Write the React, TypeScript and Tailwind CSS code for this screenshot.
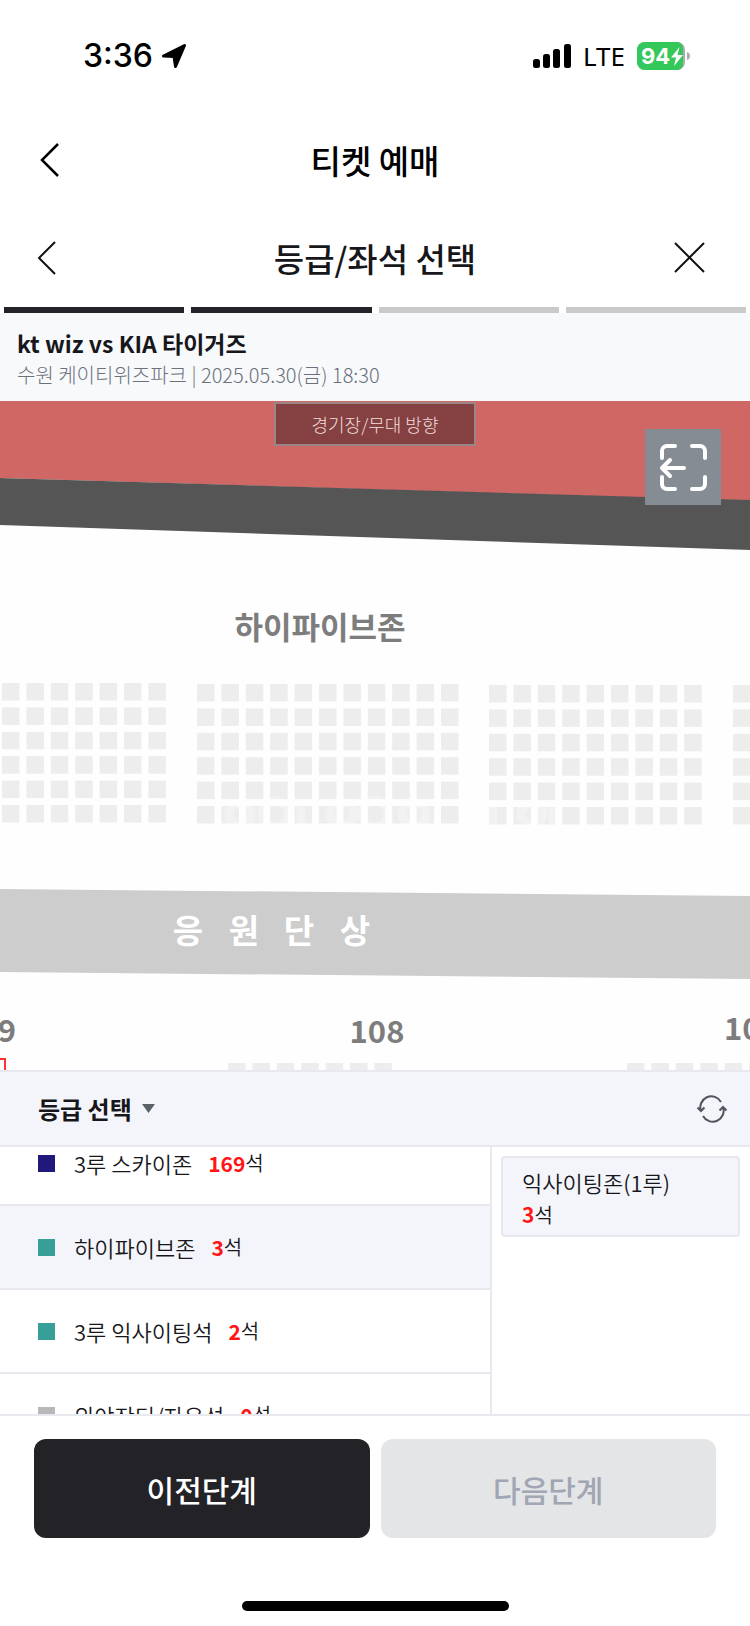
import { useState } from "react";

type Grade = {
    name: string;
    seats: number;
    color: string;
};

const grades: Grade[] = [
    { name: '3루 스카이존', seats: 169, color: 'bg-[#20187a]' },
    { name: '하이파이브존', seats: 3, color: 'bg-[#379e98]' },
    { name: '3루 익사이팅석', seats: 2, color: 'bg-[#379e98]' },
    { name: '외야잔디/자유석', seats: 0, color: 'bg-[#b8b8b8]' },
];

const TOTAL_STEPS = 4;
const CURRENT_STEP = 2;

// Seat blocks on the map
const SEAT_PITCH = 24.4;
const blocks = [
    { x: 2, y: 282, cols: 7, rows: 6 },
    { x: 197, y: 283, cols: 11, rows: 6 },
    { x: 489, y: 284, cols: 9, rows: 6 },
    { x: 733, y: 284, cols: 1, rows: 6 },
    { x: 228, y: 662, cols: 7, rows: 1 },
    { x: 627, y: 662, cols: 6, rows: 1 },
];

const StatusBar = () => (
    <div className="flex h-[112px] items-center justify-between pr-[59px] pl-[83px] text-black">
        <div className="flex items-center gap-2">
            <span className="font-[Inter] text-[32px] leading-8 font-medium">3:36</span>
            <svg width="26" height="26" viewBox="0 0 26 26" stroke="#000" strokeWidth="3" strokeLinejoin="round" aria-hidden="true">
                <path d="M23.500 2.500 14.500 23.500 13 13.500 2.500 13Z" />
            </svg>
        </div>
        <div className="flex items-center">
            <svg width="38" height="24" viewBox="0 0 38 24" aria-hidden="true">
                <rect x="0" y="15" width="7" height="9" rx="2.5" />
                <rect x="10" y="10" width="7" height="14" rx="2.5" />
                <rect x="20" y="5" width="7" height="19" rx="2.5" />
                <rect x="31" y="0" width="7" height="24" rx="2.5" />
            </svg>
            <span className="ml-3 font-['Noto_Sans'] text-[26px] leading-8">LTE</span>
            <svg className="ml-3" width="54" height="28" viewBox="0 0 54 28" role="img" aria-label="94% 충전 중">
                <rect x="0" y="0" width="48" height="28" rx="8" fill="#a9adb0" />
                <path d="M8 0h32a6 6 0 0 1 6 6v16a6 6 0 0 1-6 6H8a8 8 0 0 1-8-8V8a8 8 0 0 1 8-8Z" fill="#34c759" />
                <path d="M50 10c4 1 4 7 0 8Z" fill="#a9adb0" />
                <text x="4" y="22" fontSize="22" fontWeight="700" fill="#fff" fontFamily="Inter, sans-serif">94</text>
                <path d="M42.500 5 34 15.500h5L37 24l9-11h-5.500Z" fill="#fff" />
            </svg>
        </div>
    </div>
);

const SeatMap = () => (
    <svg className="block h-auto w-full" viewBox="0 0 750 669" fontFamily="'Noto Sans CJK KR', sans-serif">
        <rect width="750" height="669" fill="#fefefe" />
        <path d="M0 0H750V100L0 77Z" fill="#cf6765" />
        <path d="M0 77 750 99V149L0 124Z" fill="#555" />
        {blocks.map((block) =>
            Array.from({ length: block.rows * block.cols }, (_, i) => (
                <rect
                    key={`${block.x}-${block.y}-${i}`}
                    x={block.x + (i % block.cols) * SEAT_PITCH}
                    y={block.y + Math.floor(i / block.cols) * SEAT_PITCH}
                    width="17.5"
                    height="17.5"
                    fill="#ededed"
                />
            ))
        )}
        {/* faint watermark over the last row */}
        <g fill="none" stroke="#fff" strokeWidth="9" opacity="0.3">
            <circle cx="240" cy="413" r="11" />
            <circle cx="275" cy="413" r="13" />
            <path d="M301 403v20" />
            <circle cx="342" cy="413" r="12" />
            <circle cx="375" cy="413" r="13" />
            <circle cx="414" cy="413" r="12" />
            <path d="M493 403v20M553 403v20" />
            <circle cx="532" cy="413" r="11" />
        </g>
        <text x="320" y="238" textAnchor="middle" fontSize="31" fontWeight="700" fill="#7d7d7d">하이파이브존</text>
        <path d="M0 488 750 495V578L0 571Z" fill="#cdcdcd" />
        <g textAnchor="middle" fontSize="33" fontWeight="700" fill="#fff">
            <text x="188" y="542">응</text>
            <text x="244" y="542">원</text>
            <text x="299" y="542">단</text>
            <text x="355" y="542">상</text>
        </g>
        <g fontSize="31" fontWeight="700" fill="#7d7d7d">
            <text x="16" y="641" textAnchor="end">109</text>
            <text x="377" y="642" textAnchor="middle">108</text>
            <text x="724" y="639">107</text>
        </g>
        <path d="M0 658H5V669" fill="none" stroke="#f33" strokeWidth="2" />
    </svg>
);

const App: React.FC = () => {
    const [selectedGrade, setSelectedGrade] = useState<string>('하이파이브존');

    return (
        <div className="min-h-screen bg-white font-['Noto_Sans_CJK_KR',sans-serif] text-[#17171b]">
            <StatusBar />

            <header className="flex h-24 items-center justify-between px-9">
                <button aria-label="뒤로" className="w-11">
                    <svg width="28" height="36" viewBox="0 0 28 36" fill="none" stroke="#000" strokeWidth="2.500">
                        <path d="M22 2 6 18 22 34" />
                    </svg>
                </button>
                <h1 className="text-[33px] leading-10 font-medium text-black">티켓 예매</h1>
                <span className="w-11"></span>
            </header>

            <div className="flex h-[99px] items-center justify-between px-9">
                <button aria-label="이전" className="w-11">
                    <svg width="28" height="36" viewBox="0 0 28 36" fill="none" stroke="#111" strokeWidth="2">
                        <path d="M19 2 3 18 19 34" />
                    </svg>
                </button>
                <h2 className="text-[33px] leading-10 font-medium">등급/좌석 선택</h2>
                <button aria-label="닫기" className="w-11 pl-1">
                    <svg width="32" height="32" viewBox="0 0 32 32" fill="none" stroke="#111" strokeWidth="2">
                        <path d="M1 1 30 30M30 1 1 30" />
                    </svg>
                </button>
            </div>

            <div className="flex gap-[7px] px-1">
                {Array.from({ length: TOTAL_STEPS }, (_, i) => (
                    <div key={i} className={`h-1.5 flex-1 ${i < CURRENT_STEP ? 'bg-[#232228]' : 'bg-[#cacaca]'}`}></div>
                ))}
            </div>

            <section className="h-[88px] bg-[#f8f9fb] px-[17px] pt-3.5">
                <h3 className="text-[23px] leading-8 font-bold">kt wiz vs KIA 타이거즈</h3>
                <p className="text-[20px] leading-8 font-light text-[#6a717b]">수원 케이티위즈파크 | 2025.05.30(금) 18:30</p>
            </section>

            <section className="relative">
                <SeatMap />
                <div className="absolute top-px left-1/2 flex h-11 w-[202px] -translate-x-1/2 items-center justify-center border-2 border-[#9b8585] bg-[#854141] text-[18px] font-light text-[#f0dede]">
                    경기장/무대 방향
                </div>
                <button aria-label="전체 보기" className="absolute top-7 right-[29px] flex size-[76px] items-center justify-center bg-[#858c93]">
                    <svg width="48" height="48" viewBox="0 0 48 48" fill="none" stroke="#fff" strokeWidth="4" strokeLinecap="round" strokeLinejoin="round">
                        <path d="M3 15V8a5 5 0 0 1 5-5h8M33 3h8a5 5 0 0 1 5 5v7M46 34v7a5 5 0 0 1-5 5h-8M16 46H8a5 5 0 0 1-5-5v-7M25 25H3M11 17 3 25 11 33" />
                    </svg>
                </button>
            </section>

            <div className="flex h-[77px] items-center justify-between border-y-2 border-[#e8e9ef] bg-[#f4f5fa] pr-[22px] pl-[38px]">
                <button className="flex items-center gap-2.5 text-[24px] leading-8 font-bold">
                    등급 선택
                    <svg width="13" height="9" viewBox="0 0 13 9" fill="#5a6268"><path d="M0 0H13L6.500 9Z" /></svg>
                </button>
                <button aria-label="새로고침">
                    <svg width="32" height="28" viewBox="0 0 32 28" fill="none" stroke="#50565c" strokeWidth="2">
                        <path d="M5 16A11 11 0 0 1 25 7M27 12A11 11 0 0 1 7 21M1.500 12.500 5 16 8.500 12.500M23.500 15.500 27 12 30.500 15.500" />
                    </svg>
                </button>
            </div>

            <div className="flex h-[269px] border-b-2 border-[#e8e9ef]">
                <ul className="w-[492px] overflow-hidden border-r-2 border-[#e8e9ef]">
                    {grades.map((grade) => (
                        <li key={grade.name} className="first:-mt-[25px]">
                            <button
                                onClick={() => setSelectedGrade(grade.name)}
                                className={`flex h-[84px] w-full items-center border-b-2 border-[#e8e9ef] pl-[38px] leading-8 ${grade.name === selectedGrade ? 'bg-[#f4f5fa]' : 'bg-white'}`}
                            >
                                <span className={`mr-[19px] size-[17px] ${grade.color}`}></span>
                                <span className="mr-4 text-[22px] font-[350]">{grade.name}</span>
                                <strong className="text-[21px] font-bold text-[#ff1515]">{grade.seats}</strong>
                                <span className="text-[20px] font-[350]">석</span>
                            </button>
                        </li>
                    ))}
                </ul>
                <div className="flex-1 py-[9px] pr-[10px] pl-[9px]">
                    <button className="w-full rounded-sm border-2 border-[#e6e8ee] bg-[#f4f5fa] px-[19px] pt-2 pb-1 text-left leading-8 font-[350]">
                        <span className="block text-[22px]">익사이팅존(1루)</span>
                        <span className="block text-[20px]"><strong className="text-[21px] font-bold text-[#ff1515]">3</strong>석</span>
                    </button>
                </div>
            </div>

            <div className="flex gap-[11px] px-[34px] pt-[23px] text-[30px] leading-10 font-medium">
                <button className="h-[99px] flex-1 rounded-xl bg-[#232227] text-white">이전단계</button>
                <button disabled className="h-[99px] flex-1 rounded-xl bg-[#e4e5e7] text-[#a0a6b3]">다음단계</button>
            </div>

            <div className="flex justify-center pt-[63px] pb-[15px]">
                <div className="h-2.5 w-[267px] rounded-full bg-black"></div>
            </div>
        </div>
    )
}

export default App;
